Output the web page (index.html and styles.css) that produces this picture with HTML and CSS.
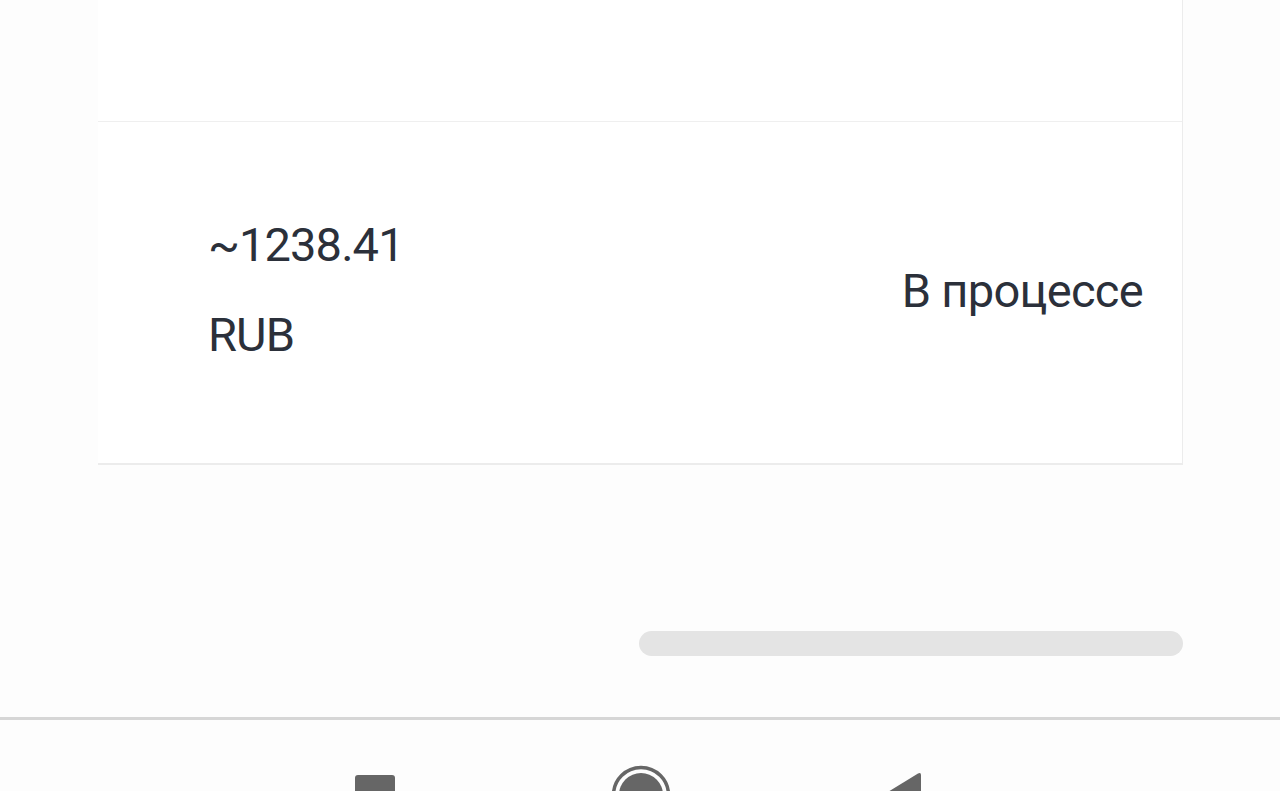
FILE: index.html
```html
<!DOCTYPE html>
<html lang="ru">
<head>
    <meta charset="UTF-8">
    <meta name="viewport" content="width=device-width, initial-scale=1.0">
    <title>Операции</title>
    <link rel="stylesheet" href="styles.css">
</head>
<body>

    <div class="page">
        <div class="table-card">
            <div class="row row-top"></div>
            <div class="row row-item">
                <div class="cell cell-amount">
                    <div>~1238.41</div>
                    <div>RUB</div>
                </div>
                <div class="cell cell-status">В процессе</div>
            </div>
        </div>

        <div class="scroll-track"></div>
    </div>

    <div class="nav-bar">
        <svg class="nav-square" width="40" height="46" viewBox="0 0 40 46">
            <rect x="0" y="0" width="40" height="46" rx="3" fill="#666"/>
        </svg>
        <svg class="nav-home" width="60" height="60" viewBox="0 0 60 60">
            <circle cx="30" cy="30" r="27.5" fill="none" stroke="#666" stroke-width="3.5"/>
            <circle cx="30" cy="30" r="22" fill="#666"/>
        </svg>
        <svg class="nav-back" width="42" height="50" viewBox="0 0 42 50">
            <path d="M41 3 L41 47 Q41 50 38 48.5 L3 27 Q0 25 3 23 L38 1.5 Q41 0 41 3 Z" fill="#666"/>
        </svg>
    </div>

</body>
</html>
```

FILE: styles.css
```css
body {
    margin: 0;
    height: 791px;
    overflow: hidden;
    background: #fdfdfd;
    font-family: 'Roboto', 'Liberation Sans', sans-serif;
    color: #2b303a;
}
.page {
    height: 717px;
}
.table-card {
    margin-left: 98px;
    width: 1084px;
    background: #fff;
    border-right: 1px solid #ececec;
    border-bottom: 2px solid #ececec;
}
.row {
    display: flex;
    align-items: center;
}
.row-top {
    height: 121px;
    border-bottom: 1px solid #efefef;
}
.row-item {
    height: 341px;
    justify-content: space-between;
}
.cell-amount {
    padding: 0 0 6px 110px;
    font-size: 47px;
    letter-spacing: -0.9px;
    line-height: 90px;
}
.cell-status {
    padding: 0 39px 4px 0;
    font-size: 47px;
    letter-spacing: -0.7px;
    line-height: 56px;
}
.scroll-track {
    margin: 166px 0 0 639px;
    width: 544px;
    height: 25px;
    border-radius: 13px;
    background: #e4e4e4;
}
.nav-bar {
    height: 71px;
    border-top: 3px solid #d6d6d6;
    background: #fdfdfd;
    display: flex;
    align-items: flex-start;
    overflow: hidden;
}
.nav-square {
    margin: 55px 0 0 355px;
    flex-shrink: 0;
}
.nav-home {
    margin: 45px 0 0 216px;
    flex-shrink: 0;
}
.nav-back {
    margin: 52px 0 0 209px;
    flex-shrink: 0;
}
```
